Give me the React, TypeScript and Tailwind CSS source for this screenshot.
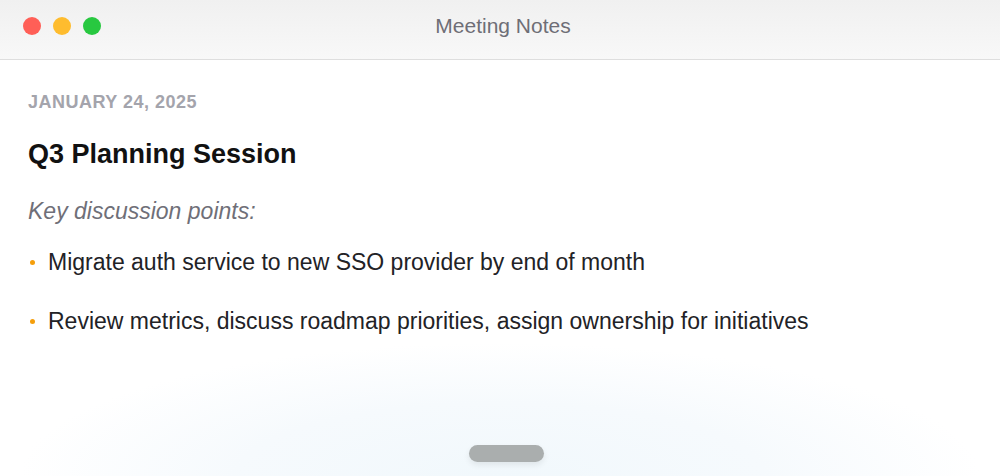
const notes = [
  "Migrate auth service to new SSO provider by end of month",
  "Review metrics, discuss roadmap priorities, assign ownership for initiatives",
];

function TitleBar() {
  return (
    <div className="relative flex h-[60px] items-start border-b border-[#dedede] bg-gradient-to-b from-[#f0f0f0] to-[#f8f8f8] px-[23px] pt-[17px]">
      <div className="flex gap-[12px]">
        <span className="h-[18px] w-[18px] rounded-full bg-[#ff5f57]" />
        <span className="h-[18px] w-[18px] rounded-full bg-[#febc2e]" />
        <span className="h-[18px] w-[18px] rounded-full bg-[#28c840]" />
      </div>
      <div className="pointer-events-none absolute inset-x-0 top-[12px] flex justify-center pl-[6px] text-[21px] leading-[28px] text-[#6e6e76]">
        Meeting Notes
      </div>
    </div>
  );
}

export default function App() {
  return (
    <div
      className="flex h-[476px] w-[1000px] flex-col overflow-hidden bg-white"
      style={{ fontFamily: '"Liberation Sans", Arial, sans-serif' }}
    >
      <TitleBar />
      <div className="flex flex-1 flex-col bg-[radial-gradient(ellipse_48%_32%_at_50%_100%,#f1f8fc_0%,#f6fafd_55%,#ffffff_100%)] px-[28px]">
        <div className="mt-[30px] text-[18px] font-bold uppercase leading-[24px] tracking-[0.5px] text-[#a4a4ac]">
          January 24, 2025
        </div>
        <h1 className="mt-[23px] text-[27px] font-bold leading-[34px] text-[#111111]">Q3 Planning Session</h1>
        <p className="mt-[25px] text-[23px] italic leading-[30px] text-[#6f6f78]">Key discussion points:</p>
        <ul className="mt-[21px] flex flex-col gap-[29px]">
          {notes.map((n) => (
            <li key={n} className="flex items-center text-[23px] leading-[30px] text-[#222226]">
              <span className="ml-[2px] mr-[13px] h-[5px] w-[5px] rounded-full bg-[#f59e0b]" />
              {n}
            </li>
          ))}
        </ul>
        <div className="mt-auto mb-[14px] flex justify-center pl-[13px]">
          <div className="h-[17px] w-[75px] rounded-full bg-[#aaaeae] shadow-[0_3px_6px_rgba(0,0,0,0.08)]" />
        </div>
      </div>
    </div>
  );
}
